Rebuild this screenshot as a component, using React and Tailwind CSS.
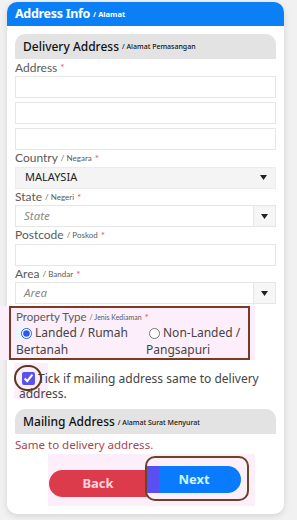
import React from 'react';

const poppins = { fontFamily: '"Noto Sans", "Open Sans", sans-serif' };
const labelFont = { fontFamily: 'Lato, "Open Sans", sans-serif' };

const Req = () => <span className="text-[#e0566a] ml-[3px] text-[10px]">*</span>;

const Label = ({ main, sub }) => (
  <div className="h-[16.5px] leading-[16px] text-[12px] text-[#5a5a5a] flex items-center" style={labelFont}>
    <span>{main}</span>
    {sub && <span className="text-[8px] ml-[3px]">/ {sub}</span>}
    <Req />
  </div>
);

const Input = () => <div className="h-[22px] border border-[#e6e6e6] bg-white" />;

const Arrow = () => (
  <svg width="7" height="5" viewBox="0 0 7 5">
    <path d="M0 0 L7 0 L3.5 5 Z" fill="#222" />
  </svg>
);

const SplitSelect = ({ placeholder }) => (
  <div className="h-[22px] border border-[#e6e6e6] bg-white flex">
    <div className="flex-1 flex items-center pl-[8px] italic text-[11.5px] text-[#8a8a8a]" style={poppins}>
      {placeholder}
    </div>
    <div className="w-[22px] border-l border-[#e6e6e6] bg-[#f6f6f6] flex items-center justify-center">
      <Arrow />
    </div>
  </div>
);

const SectionHead = ({ main, sub }) => (
  <div className="h-[25px] bg-[#e3e3e3] rounded-t-[10px] px-[8px] flex items-center" style={poppins}>
    <span className="text-[12px] font-medium text-[#111]">{main}</span>
    <span className="text-[7px] font-medium text-[#111] ml-[3px] mt-[2px]">/ {sub}</span>
  </div>
);

export default function App() {
  return (
    <div className="min-h-[520px] bg-[#f1f1f1] pt-[2px] px-[7px] pb-[7px]">
      <div className="bg-white rounded-[10px] shadow-[0_2px_6px_rgba(0,0,0,0.12)] w-[277px] pb-[8px]">
        <div className="h-[24px] bg-[#0a7ff6] rounded-t-[10px] px-[8px] flex items-center text-white" style={poppins}>
          <span className="text-[12.5px] font-bold tracking-[-0.3px]">Address Info</span>
          <span className="text-[7.5px] font-bold ml-[3px] mt-[2px]">/ Alamat</span>
        </div>

        <div className="px-[8px] pt-[8px]">
          <SectionHead main="Delivery Address" sub="Alamat Pemasangan" />

          <div className="flex items-center h-[17px] leading-[17px] text-[12px] text-[#5a5a5a]" style={labelFont}>
            Address <Req />
          </div>
          <div className="flex flex-col gap-[4px]">
            <Input />
            <Input />
            <Input />
          </div>

          <Label main="Country" sub="Negara" />
          <div className="h-[22px] border border-[#ececec] bg-[#f4f4f4] flex items-center justify-between pl-[9px] pr-[8px]">
            <span className="text-[11px] text-[#222]" style={poppins}>MALAYSIA</span>
            <Arrow />
          </div>

          <Label main="State" sub="Negeri" />
          <SplitSelect placeholder="State" />

          <Label main="Postcode" sub="Poskod" />
          <Input />

          <Label main="Area" sub="Bandar" />
          <SplitSelect placeholder="Area" />
        </div>

        <div className="bg-[#fdeefb] mt-[2px] ml-[-7px] w-[255px] pl-[9px] pr-[5px]">
          <div className="border-[2.5px] border-[#7b3a26] h-[54px] pl-[5px] pt-[2px] text-[#5a5a5a]">
            <div className="flex items-center h-[14px] text-[11.5px]" style={labelFont}>
              Property Type
              <span className="text-[7px] ml-[3px]">/ Jenis Kediaman</span>
              <Req />
            </div>
            <div className="flex text-[12px] leading-[17px] text-[#444]" style={poppins}>
              <label className="w-[130px]">
                <span className="inline-flex items-center align-middle pl-[5px] bg-[#e6f8fb]">
                  <input type="radio" name="pt" defaultChecked className="w-[11px] h-[11px] accent-[#2c5be8] m-0" />
                </span>
                <span className="ml-[3px]">Landed / Rumah Bertanah</span>
              </label>
              <label className="w-[100px]">
                <input type="radio" name="pt" className="w-[11px] h-[11px] m-0 align-middle ml-[3px]" />
                <span className="ml-[3px]">Non-Landed / Pangsapuri</span>
              </label>
            </div>
          </div>
        </div>

        <div className="px-[8px]">
          <div className="relative pt-[11px] text-[12px] leading-[15px] text-[#444]" style={poppins}>
            <div className="absolute left-[-1px] top-[3px] w-[34px] h-[36px] bg-[#fdeefb]" />
            <label className="relative block pl-[4px]">
              <input type="checkbox" defaultChecked className="w-[13px] h-[13px] accent-[#5a52ea] align-middle m-0 ml-[3px] mr-[3px] relative top-[-1px]" />
              <span>Tick if mailing address same to delivery address.</span>
            </label>
            <div className="absolute left-[-1px] top-[5px] w-[28px] h-[26px] rounded-full border-[2.5px] border-[#5b3a1f]" />
          </div>

          <div className="mt-[8px]">
            <SectionHead main="Mailing Address" sub="Alamat Surat Menyurat" />
          </div>
          <div className="h-[20px] pt-[1px] flex items-center text-[11.5px] text-[#a8454f]" style={poppins}>
            Same to delivery address.
          </div>

          <div className="flex ml-[33px] w-[207px] bg-[#fdeefb] pt-[2px] pb-[5px]">
            <div className="flex items-center pt-[10px] pl-[1px]">
              <button className="w-[98px] h-[27px] rounded-l-full bg-[#dc3b4c] text-[#ffd3de] text-[13px] font-bold" style={poppins}>
                Back
              </button>
            </div>
            <div className="ml-[-2px] border-[2.5px] border-[#6b4423] rounded-[10px] pt-[7.5px] pb-[5.5px] pr-[6px]">
              <button
                className="w-[94px] h-[27px] rounded-r-full bg-[linear-gradient(to_right,#5a4ff0_0px,#5a4ff0_12px,#0a7bff_12px)] text-[#c9f6ff] text-[13px] font-bold"
                style={poppins}
              >
                Next
              </button>
            </div>
          </div>
        </div>
      </div>
    </div>
  );
}
